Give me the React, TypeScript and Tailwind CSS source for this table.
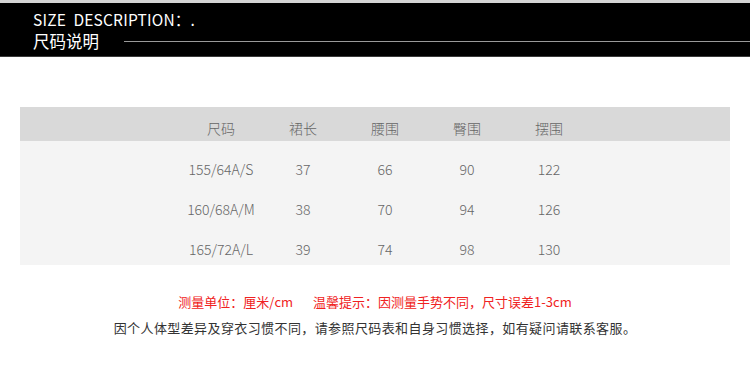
const cjk = "font-['Noto_Sans_CJK_SC','Noto_Sans',sans-serif]"

const rows = [
  ["155/64A/S", "37", "66", "90", "122"],
  ["160/68A/M", "38", "70", "94", "126"],
  ["165/72A/L", "39", "74", "98", "130"],
]

const heads = ["尺码", "裙长", "腰围", "臀围", "摆围"]

export default function App() {
  return (
    <div className={`w-[750px] h-[390px] bg-white overflow-hidden ${cjk}`}>
      {/* title band */}
      <div className="border-t-[3px] border-[#d4d4d4]">
        <div className="h-[54px] bg-black border-b border-[#3a3a3a] pl-[33px] pt-[5px] text-white">
          <div className="text-[15.5px] leading-[22px] tracking-[0.2px]">
            SIZE&nbsp;&nbsp;DESCRIPTION：.
          </div>
          <div className="flex items-center">
            <span className="text-[16.5px] leading-[22px]">尺码说明</span>
            <div className="ml-[25px] h-px flex-1 bg-[#9a9a9a]" />
          </div>
        </div>
      </div>

      {/* size table */}
      <div className="mx-[20px] mt-[50px] text-[14px] font-light text-[#666]">
        <div className="h-[34px] bg-[#d9d9d9] flex items-center pt-[8px] pl-[160px]">
          {heads.map((h) => (
            <div key={h} className="w-[82px] text-center">
              {h}
            </div>
          ))}
        </div>
        <div className="h-[124px] bg-[#f4f4f4] pt-[8px] overflow-hidden">
          {rows.map((r) => (
            <div key={r[0]} className="h-[40px] flex items-center pl-[160px]">
              {r.map((c, i) => (
                <div key={i} className="w-[82px] text-center">
                  {c}
                </div>
              ))}
            </div>
          ))}
        </div>
      </div>

      {/* notes */}
      <div className="mt-[27px] text-[13px] leading-[20px] text-center">
        <div className="text-[#f02222]">
          测量单位：厘米/cm<span className="ml-[20px]">温馨提示：因测量手势不同，尺寸误差1-3cm</span>
        </div>
        <div className="mt-[6px] text-[#333] tracking-[0.4px]">
          因个人体型差异及穿衣习惯不同，请参照尺码表和自身习惯选择，如有疑问请联系客服。
        </div>
      </div>
    </div>
  )
}
